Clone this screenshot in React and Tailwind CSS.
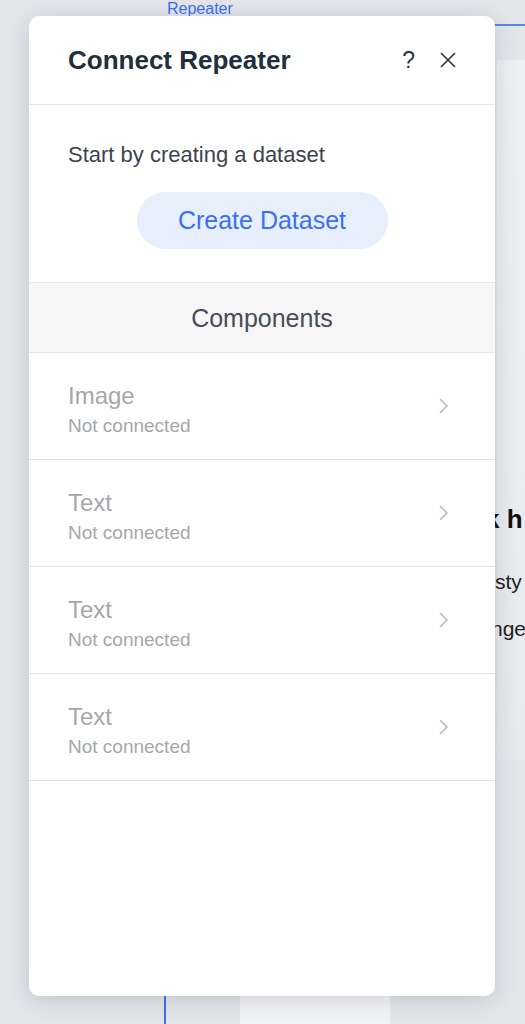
import React from "react";

const rows = [
  { name: "Image" },
  { name: "Text" },
  { name: "Text" },
  { name: "Text" },
];

const Chevron = () => (
  <svg width="12" height="20" viewBox="0 0 12 20" fill="none">
    <path d="M2 3l7 7-7 7" stroke="#b8babf" strokeWidth="1.6" />
  </svg>
);

const App = () => {
  return (
    <div
      className="relative w-[525px] h-[1024px] overflow-hidden bg-[#e4e6ea]"
      style={{ fontFamily: '"Liberation Sans", Arial, sans-serif' }}
    >
      {/* editor canvas behind the panel */}
      <div className="absolute left-[167px] top-[-3px] text-[16px] text-[#3b6ff5]">Repeater</div>
      <div className="absolute left-[493px] top-[24px] w-[40px] h-[2px] bg-[#5b86f0]" />
      <div className="absolute left-[497px] top-[60px] w-[40px] h-[700px] bg-gradient-to-b from-[#eef0f3] to-[#e8eaed]" />
      <div className="absolute left-[485px] top-[500px] text-[26px] font-bold text-[#111]">k h</div>
      <div className="absolute left-[495px] top-[566px] text-[21px] text-[#222]">sty</div>
      <div className="absolute left-[491px] top-[613px] text-[21px] text-[#222]">nge</div>
      <div className="absolute left-[164px] top-[990px] w-[2px] h-[40px] bg-[#3b6ff5]" />
      <div className="absolute left-[240px] top-[996px] w-[150px] h-[30px] bg-[#f3f4f6]" />

      <div className="relative pl-[29px] pt-[16px]">
        <div className="w-[466px] h-[980px] bg-white rounded-[10px] shadow-[0_4px_24px_rgba(40,50,70,0.18)] flex flex-col overflow-hidden">
          <div className="h-[89px] flex items-center pl-[39px] pr-[38px] border-b border-[#e5e6e8]">
            <h1 className="flex-1 text-[26px] font-bold text-[#20303c]">Connect Repeater</h1>
            <span className="text-[23px] text-[#2b3440] mr-[24px]">?</span>
            <svg width="18" height="18" viewBox="0 0 18 18">
              <path d="M2 2l14 14M16 2L2 16" stroke="#2b3440" strokeWidth="1.6" />
            </svg>
          </div>

          <div className="h-[178px] flex flex-col border-b border-[#e5e6e8]">
            <p className="pl-[39px] pt-[36px] text-[22px] leading-[28px] text-[#3d4350]">Start by creating a dataset</p>
            <div className="flex justify-center pt-[23px]">
              <button className="w-[251px] h-[57px] rounded-full bg-[#e7effd] text-[25px] text-[#3b6ff5]">
                Create Dataset
              </button>
            </div>
          </div>

          <div className="h-[70px] flex items-center justify-center bg-[#f6f6f7] border-b border-[#e5e6e8]">
            <span className="text-[25px] text-[#474c58] pt-[3px]">Components</span>
          </div>

          {rows.map((row, i) => (
            <div key={i} className="h-[107px] flex items-center pl-[39px] pr-[45px] border-b border-[#e2e3e5]">
              <div className="flex-1 pt-[10px]">
                <div className="text-[24px] leading-[30px] text-[#a5a7ab]">{row.name}</div>
                <div className="text-[19px] leading-[30px] text-[#a5a7ab]">Not connected</div>
              </div>
              <Chevron />
            </div>
          ))}
        </div>
      </div>
    </div>
  );
};

export default App;
